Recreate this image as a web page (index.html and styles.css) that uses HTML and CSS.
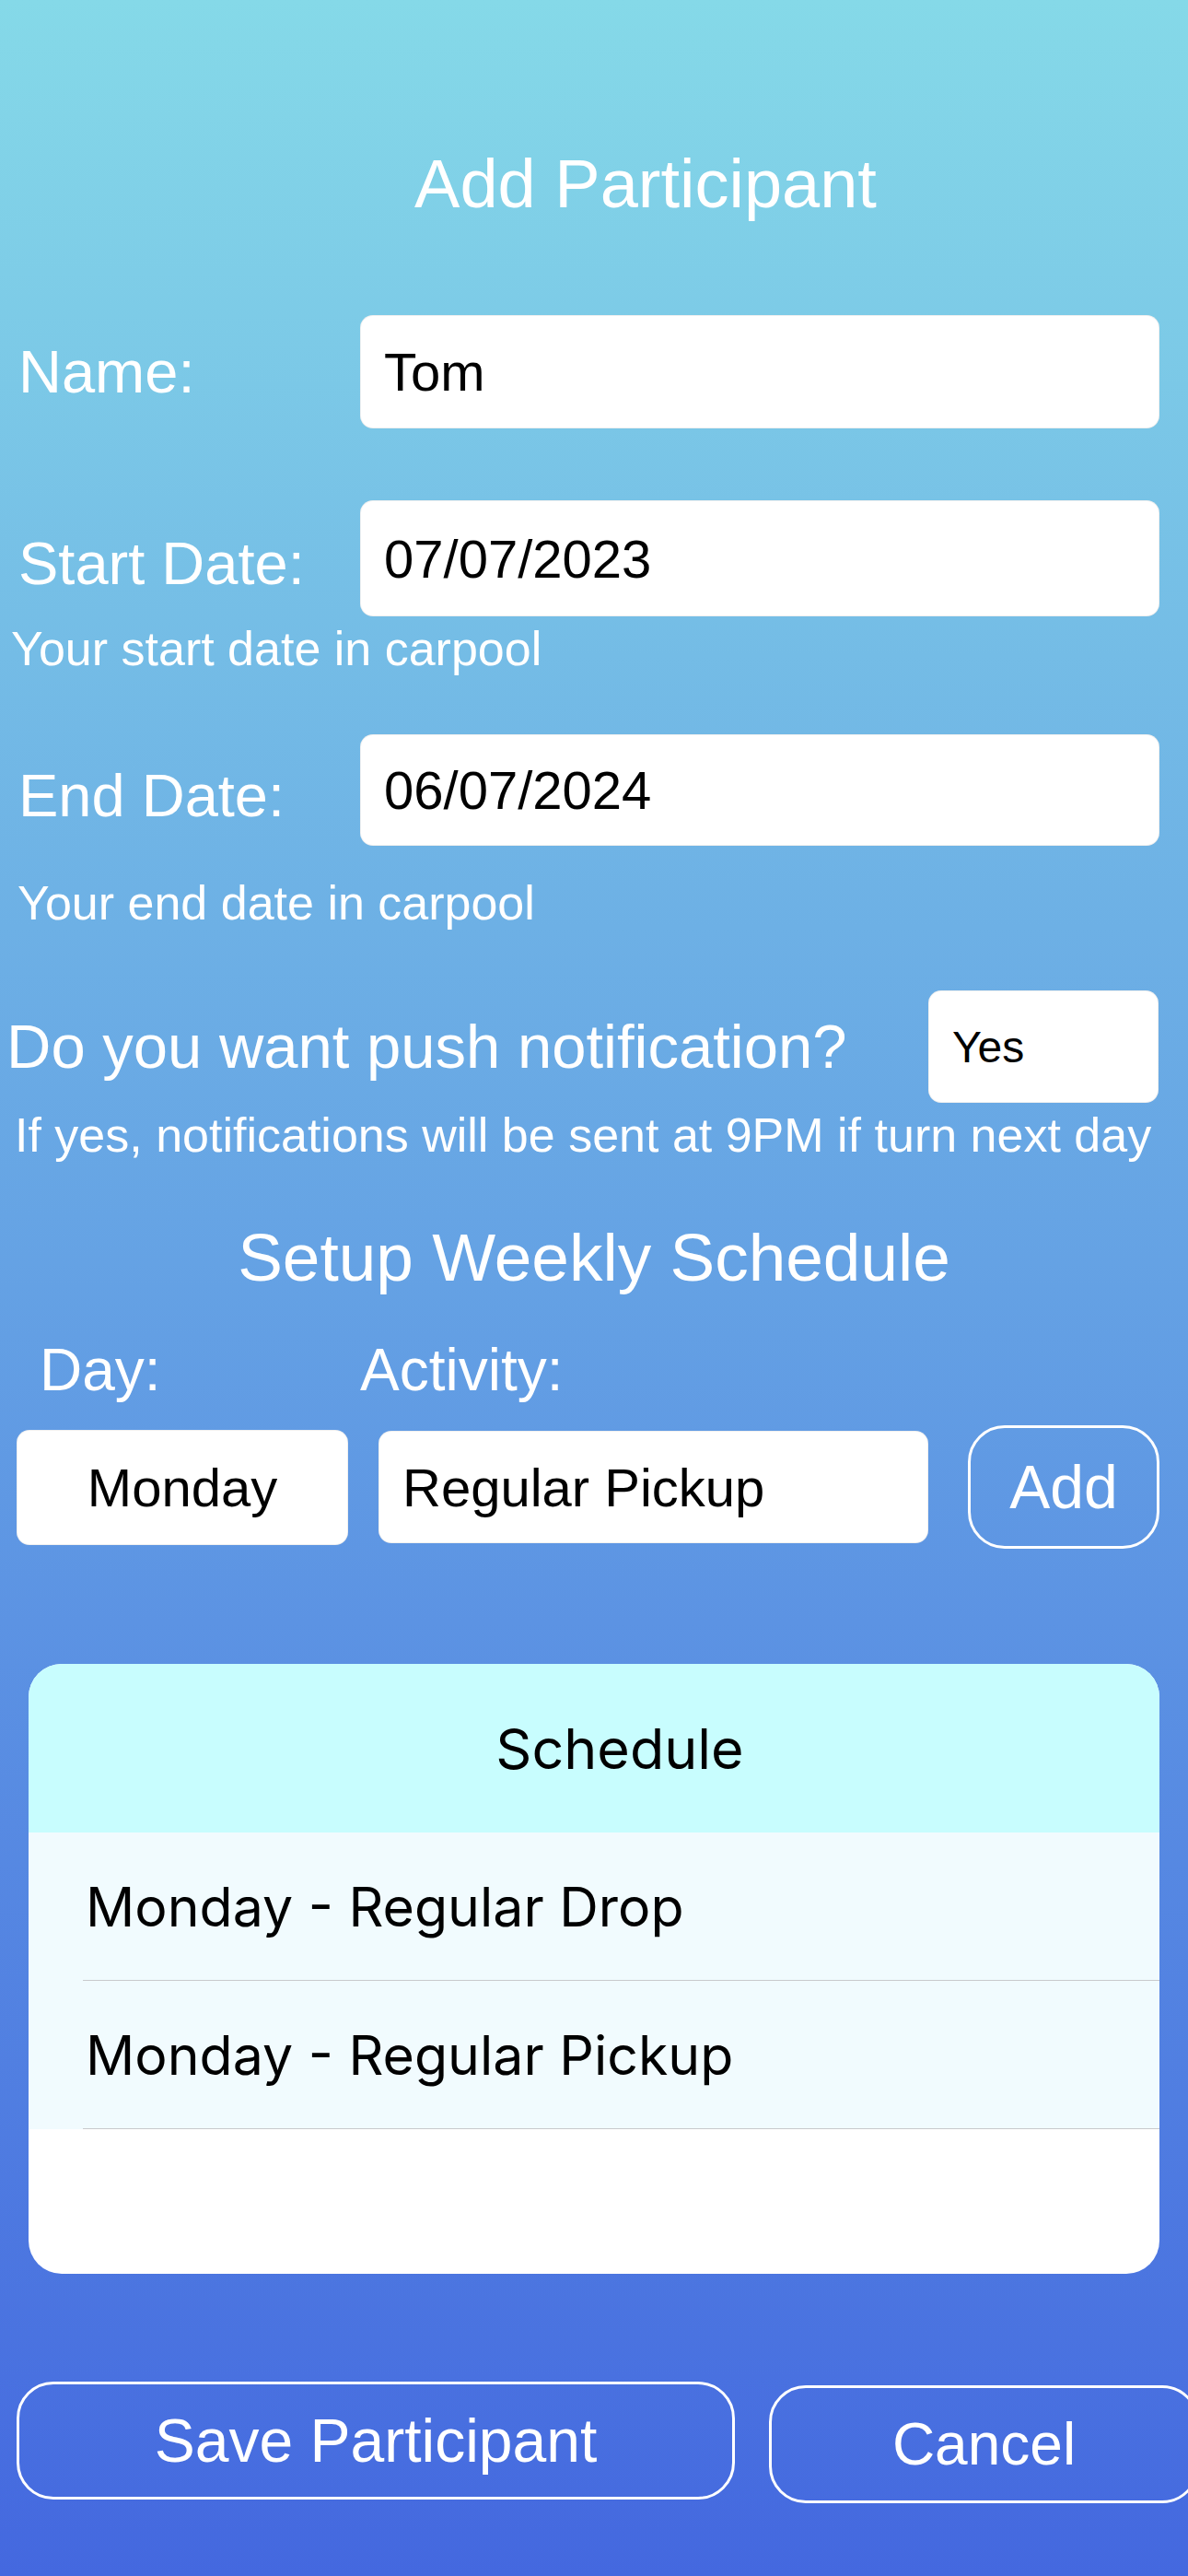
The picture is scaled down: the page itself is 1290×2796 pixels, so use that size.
FILE: index.html
```html
<!DOCTYPE html>
<html lang="en">
<head>
<meta charset="utf-8">
<title>Add Participant</title>
<link rel="stylesheet" href="styles.css">
</head>
<body>
<main class="screen">
  <h1 class="title">Add Participant</h1>

  <div class="field-row row-name">
    <span class="label">Name:</span>
    <div class="input input-wide h-name">Tom</div>
  </div>

  <div class="field-row row-start">
    <span class="label label-low">Start Date:</span>
    <div class="input input-wide h-start">07/07/2023</div>
  </div>
  <p class="hint hint-start">Your start date in carpool</p>

  <div class="field-row row-end">
    <span class="label label-low">End Date:</span>
    <div class="input input-wide h-end">06/07/2024</div>
  </div>
  <p class="hint hint-end">Your end date in carpool</p>

  <div class="push-row">
    <span class="label-push">Do you want push notification?</span>
    <div class="input yes-box">Yes</div>
  </div>
  <p class="hint hint-push">If yes, notifications will be sent at 9PM if turn next day</p>

  <h2 class="section-title">Setup Weekly Schedule</h2>

  <div class="sched-labels">
    <span class="day-label">Day:</span>
    <span class="activity-label">Activity:</span>
  </div>

  <div class="sched-inputs">
    <div class="input day-box">Monday</div>
    <div class="input activity-box">Regular Pickup</div>
    <div class="outline-btn add-btn">Add</div>
  </div>

  <section class="card">
    <div class="card-head">Schedule</div>
    <div class="card-row"><div class="card-row-inner">Monday - Regular Drop</div></div>
    <div class="card-row"><div class="card-row-inner">Monday - Regular Pickup</div></div>
  </section>

  <div class="actions">
    <div class="outline-btn btn-save">Save Participant</div>
    <div class="outline-btn btn-cancel">Cancel</div>
  </div>
</main>
</body>
</html>
```

FILE: styles.css
```css
html, body {
  margin: 0;
  padding: 0;
}

body {
  font-family: "Liberation Sans", Arial, Helvetica, sans-serif;
}

.screen {
  width: 1290px;
  height: 2796px;
  overflow: hidden;
  background: linear-gradient(180deg, #85d9e8 0%, #6db0e5 36%, #5c93e3 63%, #4468df 100%);
  color: #fff;
}

.title {
  margin: 0;
  padding: 157px 0 0 112px;
  text-align: center;
  font-size: 74px;
  line-height: 86px;
  font-weight: normal;
}

.field-row {
  display: flex;
  align-items: center;
  padding-left: 20px;
}

.row-name { margin-top: 99px; }
.row-start { margin-top: 78px; }
.row-end { margin-top: 63px; }

.label {
  flex: none;
  width: 371px;
  font-size: 65px;
  line-height: 74px;
}

.label-low {
  padding-top: 12px;
}

.input {
  box-sizing: border-box;
  display: flex;
  align-items: center;
  flex: none;
  background: #fff;
  border-radius: 14px;
  border: 1px solid rgba(0, 0, 0, 0.06);
  padding-left: 25px;
  color: #000;
  font-size: 58px;
}

.input-wide { width: 868px; }
.h-name { height: 123px; }
.h-start { height: 126px; }
.h-end { height: 121px; }

.hint {
  margin: 0;
  font-size: 52px;
  line-height: 60px;
}

.hint-start { margin-top: 5px; padding-left: 12px; }
.hint-end { margin-top: 32px; padding-left: 19px; }
.hint-push { margin-top: 5px; padding-left: 16px; }

.push-row {
  display: flex;
  align-items: center;
  justify-content: space-between;
  margin-top: 65px;
  padding: 0 32px 0 7px;
}

.label-push {
  font-size: 67px;
  line-height: 76px;
}

.yes-box {
  width: 250px;
  height: 122px;
  font-size: 48px;
}

.section-title {
  margin: 63px 0 0 0;
  text-align: center;
  font-size: 73px;
  line-height: 80px;
  font-weight: normal;
}

.sched-labels {
  display: flex;
  margin-top: 45px;
  padding-left: 43px;
  font-size: 64px;
  line-height: 74px;
}

.day-label {
  width: 348px;
}

.sched-inputs {
  display: flex;
  align-items: center;
  height: 134px;
  margin-top: 23px;
  padding-left: 18px;
}

.day-box {
  width: 360px;
  height: 125px;
  justify-content: center;
  padding-left: 0;
}

.activity-box {
  width: 597px;
  height: 122px;
  margin-left: 33px;
}

.outline-btn {
  box-sizing: border-box;
  display: flex;
  align-items: center;
  justify-content: center;
  flex: none;
  border: 3px solid #fff;
  color: #fff;
  border-radius: 40px;
}

.add-btn {
  width: 208px;
  height: 134px;
  margin-left: 43px;
  font-size: 66px;
}

.card {
  width: 1228px;
  height: 662px;
  margin: 125px 0 0 31px;
  border-radius: 36px;
  overflow: hidden;
  background: #fff;
  color: #000;
  font-family: Inter, "Noto Sans", sans-serif;
}

.card-head {
  box-sizing: border-box;
  height: 183px;
  display: flex;
  align-items: center;
  justify-content: center;
  padding-left: 56px;
  background: #c8fdfe;
  font-size: 61px;
}

.card-row {
  padding-left: 59px;
  background: #f1fbfe;
}

.card-row-inner {
  height: 160px;
  display: flex;
  align-items: center;
  padding-left: 3px;
  border-bottom: 1px solid #c8c9cc;
  font-size: 59px;
}

.actions {
  display: flex;
  align-items: flex-start;
  margin-top: 117px;
  padding-left: 18px;
}

.btn-save {
  width: 780px;
  height: 128px;
  font-size: 66px;
}

.btn-cancel {
  width: 467px;
  height: 128px;
  margin-left: 37px;
  margin-top: 4px;
  font-size: 64px;
}
```
